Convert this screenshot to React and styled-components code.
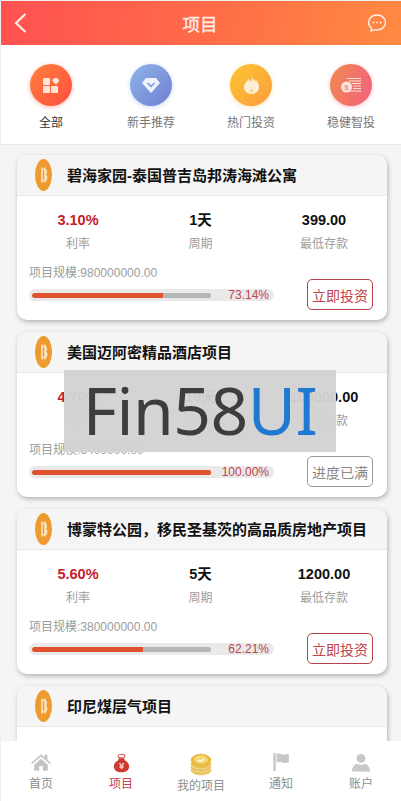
import React from 'react';
import styled, { createGlobalStyle } from 'styled-components';

const Global = createGlobalStyle`
  html, body { margin: 0; padding: 0; background: #f1f1f1; }
  body { font-family: "Liberation Sans", "Noto Sans CJK SC", sans-serif; }
  * { box-sizing: border-box; }
`;
const Page = styled.div`
  position: relative; width: 400px; height: 800px; margin: 1px 0 0 1px;
  background: #f5f5f5; overflow: hidden; display: flex; flex-direction: column;
`;
const Header = styled.header`
  flex: none; height: 44px; display: grid; grid-template-columns: 1fr auto 1fr; align-items: center;
  padding: 0 14px 0 12px; color: #ffeee6;
  background: linear-gradient(100deg, #ff5152 0%, #ff6b48 50%, #ff8a42 100%);
`;
const HeadSide = styled.div`display: flex; justify-content: ${p => p.$end ? 'flex-end' : 'flex-start'};`;
const Title = styled.h1`margin: 0 0 -1px; font-size: 17.500px; font-weight: 400; -webkit-text-stroke: .3px #ffeee6;`;
const Cats = styled.nav`
  flex: none; height: 100px; background: #fff; border-bottom: 1px solid #e9e9e9;
  display: grid; grid-template-columns: repeat(4, 100px); padding-top: 19px;
`;
const Cat = styled.div`display: flex; flex-direction: column; align-items: center; gap: 8px;`;
const CatCircle = styled.div`
  width: 42px; height: 42px; border-radius: 50%; display: flex; align-items: center; justify-content: center;
  background: ${p => p.$bg}; box-shadow: 0 1px 4px ${p => p.$glow};
`;
const CatLabel = styled.span`font-size: 12px; line-height: 18px; color: ${p => p.$active ? '#333' : '#777'};`;
const List = styled.main`flex: 1; padding: 10px 14px 0 16px; display: flex; flex-direction: column; gap: 12px; overflow: hidden;`;
const Card = styled.article`
  flex: none; height: 165px; background: #fff; border-radius: 10px; overflow: hidden;
  box-shadow: 1px 2px 5px rgba(0,0,0,.28);
`;
const CardHead = styled.div`
  height: 41px; background: #f5f5f5; border-bottom: 1px solid #e9e9e9; display: flex; align-items: center;
  padding-left: 18px; gap: 15px;
`;
const CardTitle = styled.h2`margin: 0 0 2px; font-size: 15px; font-weight: 700; color: #111; white-space: nowrap;`;
const Stats = styled.div`display: grid; grid-template-columns: 122px 123px 124px; padding: 16px 0 0 0;`;
const Stat = styled.div`display: flex; flex-direction: column; align-items: center; gap: 8px;`;
const Val = styled.b`font-size: 14.500px; line-height: 17px; color: ${p => p.$red ? '#c4202b' : '#111'};`;
const Lab = styled.span`font-size: 12px; line-height: 15px; color: #9c9c9c;`;
const Foot = styled.div`display: flex; justify-content: space-between; align-items: flex-end; padding: 14px 14px 0 12px;`;
const Info = styled.div`width: 245px; display: flex; flex-direction: column; gap: 8px; padding-bottom: 9px;`;
const Scale = styled.span`font-size: 12px; line-height: 15px; color: #9c9c9c;`;
const Track = styled.div`
  height: 12px; border-radius: 6px; background: #e9e9e9; display: flex; align-items: center;
  padding: 0 5px 0 3px; gap: 4px;
`;
const Inner = styled.div`width: 179px; flex: none; height: 5px; border-radius: 3px; background: #b6b6b6; overflow: hidden;`;
const Fill = styled.div`height: 100%; border-radius: 3px 0 0 3px; background: #e0522d;`;
const Pct = styled.span`flex: 1; text-align: right; font-size: 12px; line-height: 12px; color: #c2434f;`;
const Btn = styled.button`
  width: 66px; height: 31px; padding: 0; background: #fff; font: 14px "Liberation Sans", "Noto Sans CJK SC", sans-serif;
  border-radius: 5px;
  border: 1px solid ${p => p.$off ? '#999' : '#b5414c'}; color: ${p => p.$off ? '#888' : '#c0434c'};
`;
const Tabs = styled.footer`
  position: absolute; left: 0; right: 0; bottom: 0; height: 60px; background: #fff;
  display: grid; grid-template-columns: repeat(5, 80px);
`;
const Tab = styled.div`display: flex; flex-direction: column; align-items: center; padding-top: 12px;`;
const TabIcon = styled.div`height: ${p => p.$low ? '22px' : '20px'}; display: flex; align-items: flex-start; justify-content: center;`;
const TabLabel = styled.span`font-size: 12px; line-height: 17px; margin-top: 3px; color: ${p => p.$on ? '#c0434c' : '#8d8d8d'};`;
const Mark = styled.div`
  position: absolute; left: 63px; top: 369px; width: 272px; height: 82px; background: rgba(211,211,211,.97);
  display: flex; align-items: center; justify-content: center; padding-bottom: 4px;
  font: 400 66px/1 "Noto Sans", sans-serif; color: #3d3d3d; letter-spacing: -.5px;
`;
const MarkBlue = styled.span`color: #1f78d1;`;

const Coin = () => (
  <svg width="17" height="32" viewBox="0 0 17 32">
    <ellipse cx="8.500" cy="16" rx="8.500" ry="16" fill="#ee9a2f"/>
    <path d="M6.200 10.500h3.600c2 0 2 4.800-.6 5.200 3.200.3 3.200 5.800 0 5.800H6.200M7 8.500v15M10 8.500v15" fill="none" stroke="#fbe3bd" strokeWidth="1.600"/>
  </svg>
);
const Back = () => (
  <svg width="14" height="22" viewBox="0 0 14 22"><path d="M12.500 2 3 11l9.500 9" fill="none" stroke="#ffeee6" strokeWidth="2.200"/></svg>
);
const Chat = () => (
  <svg width="20" height="20" viewBox="0 0 20 20">
    <path d="M10 2c4.600 0 8.500 3.100 8.500 7.500S14.600 17 10 17c-.8 0-1.500 0-2.300-.3L4 18l.5-3C2.600 13.600 1.500 11.800 1.500 9.500 1.500 5.100 5.400 2 10 2Z" fill="none" stroke="#ffeee6" strokeWidth="1.400"/>
    <circle cx="6.500" cy="9.500" r="1" fill="#ffeee6"/><circle cx="10" cy="9.500" r="1" fill="#ffeee6"/><circle cx="13.500" cy="9.500" r="1" fill="#ffeee6"/>
  </svg>
);
const IconAll = () => (
  <svg width="16" height="15" viewBox="0 0 16 15" fill="#ffe6d8">
    <rect x="0" y="0" width="7" height="7" rx="1"/><rect x="9.500" y="-.500" width="5.600" height="5.600" rx=".8" transform="rotate(45 12.300 3)"/>
    <rect x="0" y="8" width="7" height="7" rx="1"/><rect x="8" y="8" width="7" height="7" rx="1"/>
  </svg>
);
const IconGem = () => (
  <svg width="18" height="16" viewBox="0 0 18 16">
    <path d="M4 1h10l4 5-9 10L0 6Z" fill="#eef3fc"/><path d="M5.500 6 9 9.500 12.500 6" fill="none" stroke="#7c93d8" strokeWidth="1.400"/>
  </svg>
);
const IconFlame = () => (
  <svg width="15" height="18" viewBox="0 0 15 18">
    <path d="M8 0c.5 3 2 4 3 5.500.3-.7.5-1.300.5-2C13.500 6 15 8 15 11c0 4-3.200 7-7.500 7S0 15 0 11c0-4 4-6 4.500-8C6 4 6.500 5 7 6c.8-2 1.200-4 1-6Z" fill="#fdeed8"/>
    <path d="M7.500 12c-1 1.500-2 2.200-1.700 3.700.4 1 3 1 3.400 0 .3-1.500-.7-2.200-1.700-3.700Z" fill="#fcd58c"/>
  </svg>
);
const IconCoins = () => (
  <svg width="20" height="15" viewBox="0 0 20 15">
    <g stroke="#fde4dc" strokeWidth="1"><path d="M6 .5h14M8 3h12M11 5.500h9M12 8h8M12 10.500h8M9 13h11"/></g>
    <circle cx="5.500" cy="9" r="5.500" fill="#fde4dc"/>
    <text x="5.500" y="12" textAnchor="middle" fontSize="8" fill="#ef7d72" fontFamily="Liberation Sans">$</text>
  </svg>
);
const Home = () => (
  <svg width="20" height="18" viewBox="0 0 22 19" fill="#c4c4c4">
    <path d="M11 1 0 10.500l1.200 1.300L11 3.500l9.800 8.300 1.200-1.300L18 7V1.500h-3v3Z"/><path d="M3.500 12.500 11 6l7.500 6.500V19H13v-5H9v5H3.500Z"/>
  </svg>
);
const Bag = () => (
  <svg width="17" height="20" viewBox="0 0 20 23">
    <ellipse cx="10" cy="3.500" rx="4" ry="2.200" fill="none" stroke="#d9534a" strokeWidth="1.200"/>
    <path d="M7 6h6l1.200 2.500C17 10 19 12.500 19 15.500c0 4.500-4 7-9 7s-9-2.500-9-7c0-3 2-5.500 4.800-7Z" fill="#cf3a30"/>
    <text x="10" y="19" textAnchor="middle" fontSize="11" fontWeight="700" fill="#f9e3dc" fontFamily="Liberation Sans">¥</text>
  </svg>
);
const Stack = () => (
  <svg width="22" height="23" viewBox="0 0 32 33">
    <g fill="#e7c15c" stroke="#f7e7a8" strokeWidth="1">
      <ellipse cx="16" cy="25" rx="15" ry="7"/><ellipse cx="16" cy="20.500" rx="15" ry="7"/><ellipse cx="16" cy="16" rx="15" ry="7"/>
    </g>
    <ellipse cx="16" cy="10" rx="15" ry="9" fill="#e9bb3c"/>
    <ellipse cx="16" cy="9.500" rx="10" ry="6" fill="#f4d97a"/>
    <path d="M12 11c3 1 7 0 8-3" fill="none" stroke="#fff" strokeWidth="2"/>
  </svg>
);
const Flag = () => (
  <svg width="17" height="18" viewBox="0 0 20 22" fill="#c8c8c8">
    <rect x="0" y="0" width="3" height="22"/><path d="M4 1c4-1.500 5 1 9 1 2 0 4-1 6-1v10c-3 1.500-5 1.500-8 .5-3-.8-5-.5-7 .5Z"/>
  </svg>
);
const User = () => (
  <svg width="18" height="19" viewBox="0 0 22 22" fill="#c8c8c8">
    <circle cx="11" cy="6" r="5.500"/><path d="M0 22c0-5 2.500-8.500 6-9.500 3 1.500 7 1.500 10 0 3.500 1 6 4.500 6 9.500Z"/>
  </svg>
);

const cats = [
  { n: '全部', bg: 'linear-gradient(135deg,#ff8039,#ff4e44)', g: 'rgba(255,90,70,.45)', I: IconAll, a: true },
  { n: '新手推荐', bg: 'linear-gradient(135deg,#8fb4ea,#6f7fd0)', g: 'rgba(120,150,240,.4)', I: IconGem },
  { n: '热门投资', bg: 'linear-gradient(135deg,#fdc62f,#fb9c3e)', g: 'rgba(253,190,70,.45)', I: IconFlame },
  { n: '稳健智投', bg: 'linear-gradient(110deg,#f08a50,#f4607e)', g: 'rgba(245,100,120,.4)', I: IconCoins },
];
const items = [
  { t: '碧海家园-泰国普吉岛邦涛海滩公寓', r: '3.10%', d: '1天', m: '399.00', s: '980000000.00', p: 73.14, w: 73 },
  { t: '美国迈阿密精品酒店项目', r: '4.70%', d: '10天', m: '100000.00', s: '6400000.00', p: 100, w: 100, off: true },
  { t: '博蒙特公园，移民圣基茨的高品质房地产项目', r: '5.60%', d: '5天', m: '1200.00', s: '380000000.00', p: 62.21, w: 62 },
  { t: '印尼煤层气项目' },
];
const tabs = [
  { n: '首页', I: Home }, { n: '项目', I: Bag, on: true }, { n: '我的项目', I: Stack, low: true },
  { n: '通知', I: Flag }, { n: '账户', I: User },
];

export default function App() {
  return (
    <Page>
      <Global />
      <Header><HeadSide><Back /></HeadSide><Title>项目</Title><HeadSide $end><Chat /></HeadSide></Header>
      <Cats>
        {cats.map(c => (
          <Cat key={c.n}>
            <CatCircle $bg={c.bg} $glow={c.g}><c.I /></CatCircle>
            <CatLabel $active={c.a}>{c.n}</CatLabel>
          </Cat>
        ))}
      </Cats>
      <List>
        {items.map(i => (
          <Card key={i.t}>
            <CardHead><Coin /><CardTitle>{i.t}</CardTitle></CardHead>
            {i.r && (
              <>
                <Stats>
                  <Stat><Val $red>{i.r}</Val><Lab>利率</Lab></Stat>
                  <Stat><Val>{i.d}</Val><Lab>周期</Lab></Stat>
                  <Stat><Val>{i.m}</Val><Lab>最低存款</Lab></Stat>
                </Stats>
                <Foot>
                  <Info>
                    <Scale>项目规模:{i.s}</Scale>
                    <Track>
                      <Inner><Fill style={{ width: `${i.w}%` }} /></Inner>
                      <Pct>{i.p.toFixed(2)}%</Pct>
                    </Track>
                  </Info>
                  <Btn $off={i.off}>{i.off ? '进度已满' : '立即投资'}</Btn>
                </Foot>
              </>
            )}
          </Card>
        ))}
      </List>
      <Mark>Fin58<MarkBlue>UI</MarkBlue></Mark>
      <Tabs>
        {tabs.map(t => (
          <Tab key={t.n}>
            <TabIcon $low={t.low}><t.I /></TabIcon>
            <TabLabel $on={t.on}>{t.n}</TabLabel>
          </Tab>
        ))}
      </Tabs>
    </Page>
  );
}
